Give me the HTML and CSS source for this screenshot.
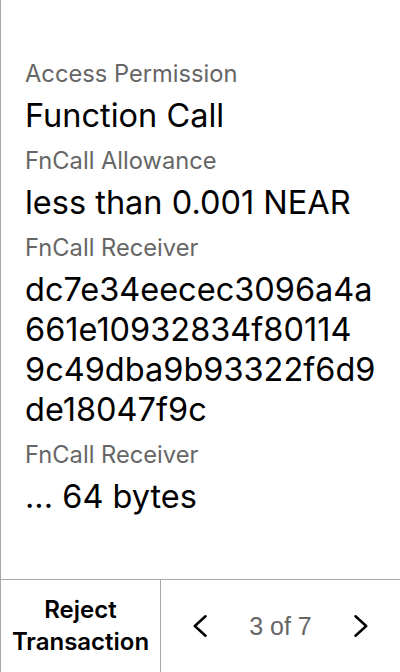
FILE: index.html
```html
<!DOCTYPE html>
<html>
<head>
<meta charset="utf-8">
<link rel="stylesheet" href="styles.css">
</head>
<body>
<div class="screen">
  <main class="content">
    <div class="field">
      <div class="label">Access Permission</div>
      <div class="value">Function Call</div>
    </div>
    <div class="field">
      <div class="label">FnCall Allowance</div>
      <div class="value">less than 0.001 NEAR</div>
    </div>
    <div class="field">
      <div class="label">FnCall Receiver</div>
      <div class="value hash"><span class="chunk">dc7e34eecec3096a4a</span><span class="chunk">661e10932834f80114</span><span class="chunk">9c49dba9b93322f6d9</span><span class="chunk">de18047f9c</span></div>
    </div>
    <div class="field">
      <div class="label">FnCall Receiver</div>
      <div class="value">... 64 bytes</div>
    </div>
  </main>
  <footer class="bar">
    <button class="reject">Reject<br>Transaction</button>
    <div class="pager">
      <svg class="chev" viewBox="0 0 14 22" width="14" height="22"><path d="M12.5 1.3 L1.8 11 L12.5 20.7" fill="none" stroke="#000" stroke-width="2.5" stroke-linecap="round" stroke-linejoin="round"/></svg>
      <span class="count">3 of 7</span>
      <svg class="chev" viewBox="0 0 14 22" width="14" height="22"><path d="M1.5 1.3 L12.2 11 L1.5 20.7" fill="none" stroke="#000" stroke-width="2.5" stroke-linecap="round" stroke-linejoin="round"/></svg>
    </div>
  </footer>
</div>
</body>
</html>
```
FILE: styles.css
```css
html, body { margin: 0; padding: 0; background: #fff; }
body { font-family: Inter, "Noto Sans", sans-serif; color: #000; }
.screen {
  width: 400px; height: 672px; box-sizing: border-box;
  border-left: 1px solid #a8a8a8;
  display: flex; flex-direction: column;
}
.content { flex: 1; padding: 59px 10px 0 24px; }
.label { font-size: 23.7px; line-height: 29px; color: #666; margin-bottom: 8px; }
.value { font-size: 32.5px; line-height: 40px; color: #000; margin-bottom: 10px; }
.hash { display: flex; flex-direction: column; }
.chunk { white-space: nowrap; }
.bar {
  height: 92px; border-top: 1px solid #a8a8a8;
  display: flex;
}
.reject {
  width: 160px; border: none; border-right: 1px solid #a8a8a8; background: #fff;
  font-family: Inter, sans-serif; font-weight: 600; font-size: 24px; line-height: 32px; color: #000;
  padding: 0;
}
.pager { flex: 1; display: flex; align-items: center; justify-content: space-between; padding: 0 32px; }
.count { font-family: "Liberation Sans", Arial, sans-serif; font-size: 25px; color: #666; }
```
